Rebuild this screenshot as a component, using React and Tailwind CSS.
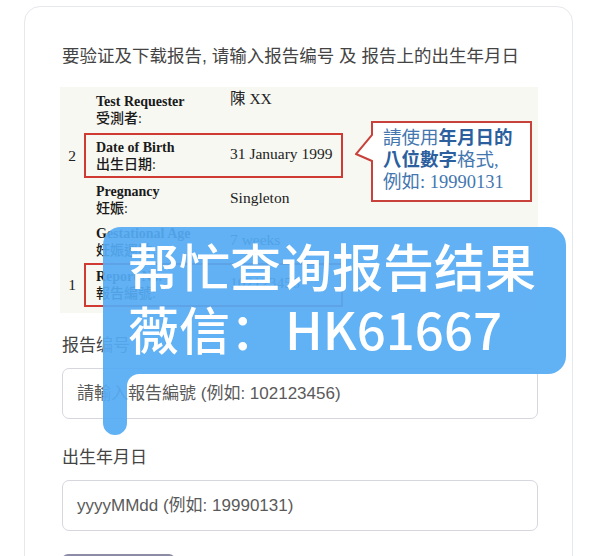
import React from "react";

const serif = "font-['Liberation_Serif','Noto_Sans_CJK_TC',serif]";

function Row({ h, num, boxed, label1, label2, value, valueTop }) {
  return (
    <div className={`flex ${h} items-center`}>
      <div className={`w-[24px] text-center text-[15.5px] text-[#222] ${serif}`}>{num}</div>
      <div
        className={`flex h-full w-[259px] items-center border-2 ${
          boxed ? "border-[#cf3b33]" : "border-transparent"
        }`}
      >
        <div className={`w-[144px] pl-[10px] text-[14px] leading-[17px] text-[#1a1a1a] ${serif}`}>
          <div className="font-bold">{label1}</div>
          <div className="font-medium">{label2}</div>
        </div>
        <div
          className={`text-[15.5px] leading-[20px] text-[#222] ${serif} whitespace-nowrap ${
            valueTop ? "self-start mt-[0px]" : "mb-[4px]"
          }`}
        >
          {value}
        </div>
      </div>
    </div>
  );
}

export default function App() {
  return (
    <div className="relative h-[556px] w-[600px] overflow-hidden bg-white">
      <div className="ml-[24px] mt-[6px] min-h-[620px] w-[549px] rounded-[16px] border border-[#e7e7ee] pl-[37px] pr-[34px] pt-[37px] font-['Liberation_Sans','Noto_Sans_CJK_SC',sans-serif]">
        <div className="text-[17.5px] leading-[24px] text-[#444] whitespace-nowrap">
          要验证及下载报告, 请输入报告编号 及 报告上的出生年月日
        </div>

        <div className="relative -ml-[2px] mt-[19px] w-[478px] bg-[#f7f8f2] pb-[6px]">
          <Row h="h-[46px]" label1="Test Requester" label2="受測者:" value="陳 XX" valueTop />
          <Row h="h-[45px]" num="2" boxed label1="Date of Birth" label2="出生日期:" value="31 January 1999" />
          <Row h="h-[43px]" label1="Pregnancy" label2="妊娠:" value="Singleton" />
          <Row h="h-[42px]" label1="Gestational Age" label2="妊娠週數:" value="7 weeks" />
          <Row h="h-[44px]" num="1" boxed label1="Report No." label2="報告編號:" value="102123456" />

          <div className="absolute left-[295px] top-[34px] h-[82px] w-[178px]">
            <svg width="178" height="82" viewBox="0 0 178 82" className="absolute left-0 top-0">
              <path
                d="M17,1 H176 V80 H17 V40 L1,33 L17,14 Z"
                fill="#ffffff"
                stroke="#c8413a"
                strokeWidth="2"
              />
            </svg>
            <div className="absolute left-[28px] top-[6px] whitespace-nowrap font-['Liberation_Serif','Noto_Sans_CJK_TC',serif] text-[18.5px] leading-[22px] text-[#4477b0]">
              <div>
                請使用<span className="font-bold text-[#2c5f9e]">年月日的</span>
              </div>
              <div>
                <span className="font-bold text-[#2c5f9e]">八位數字</span>格式,
              </div>
              <div>例如: 19990131</div>
            </div>
          </div>
        </div>

        <div className="mt-[21px] text-[17px] leading-[24px] text-[#444]">报告编号</div>
        <input
          className="mt-[10px] block h-[51px] w-[476px] rounded-[7px] border border-[#d6d6de] bg-white px-[14px] text-[17px] outline-none placeholder:text-[#5a5a5a]"
          placeholder="請輸入報告編號 (例如: 102123456)"
        />

        <div className="mt-[27px] text-[17px] leading-[24px] text-[#444]">出生年月日</div>
        <input
          className="mt-[10px] block h-[51px] w-[476px] rounded-[7px] border border-[#d6d6de] bg-white px-[14px] text-[17px] outline-none placeholder:text-[#5a5a5a]"
          placeholder="yyyyMMdd (例如: 19990131)"
        />

        <div className="mt-[23px] h-[40px] w-[113px] rounded-[6px] bg-[#8d8ca6]" />
      </div>

      {/* overlay sticker */}
      <div className="absolute left-[103px] top-[227px] h-[208px] w-[464px]">
        <svg width="464" height="208" viewBox="0 0 464 208" className="absolute left-0 top-0">
          <path
            d="M18,0 H445 A18,18 0 0 1 463,18 V129 A18,18 0 0 1 445,147 H36 A12,12 0 0 0 24,159 V196 A12,12 0 0 1 0,196 V18 A18,18 0 0 1 18,0 Z"
            fill="#55abf4"
            fillOpacity="0.93"
          />
        </svg>
        <div className="absolute left-[25px] top-[7px] whitespace-nowrap font-['Noto_Sans_CJK_SC',sans-serif] text-[51px] font-medium leading-[63px] text-white">
          <div>帮忙查询报告结果</div>
          <div>
            薇信：<span className="ml-[4px]">HK61667</span>
          </div>
        </div>
      </div>
    </div>
  );
}
